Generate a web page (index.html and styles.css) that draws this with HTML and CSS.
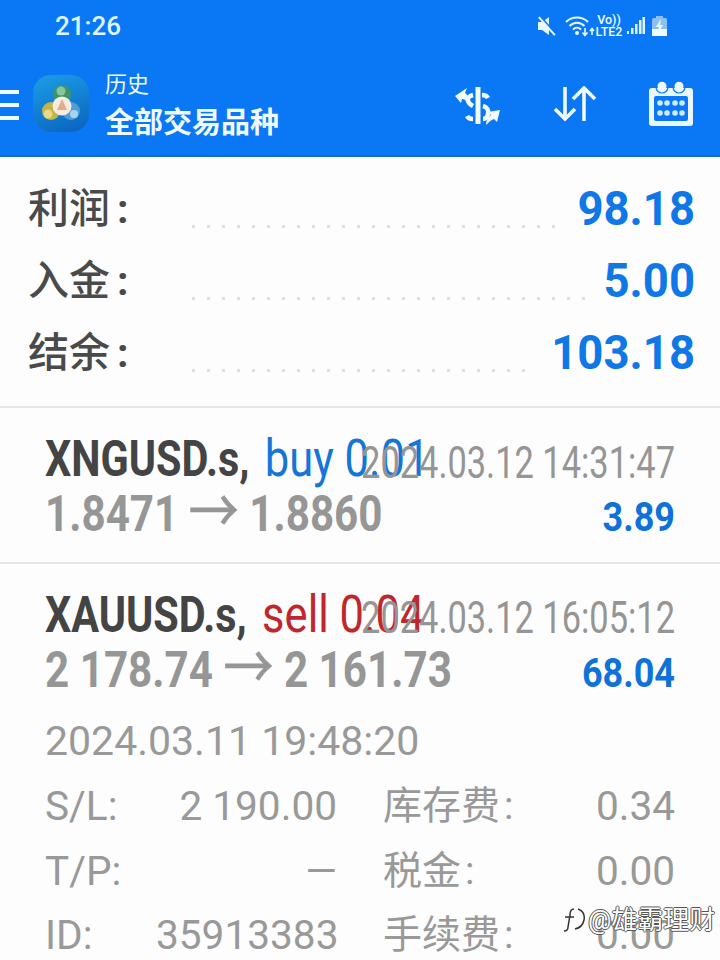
FILE: index.html
```html
<!DOCTYPE html>
<html lang="zh">
<head>
    <meta charset="UTF-8">
    <title>历史</title>
    <link rel="stylesheet" href="styles.css">
</head>
<body>
<div id="screen">
    <div id="header">
        <div class="status">
            <span class="clock">21:26</span>
            <div class="status-icons">
                <svg class="ic-mute" width="20" height="20" viewBox="0 0 20 20">
                    <path d="M1 6h4l7-5v18l-7-5H1z" fill="#e8f6ff"/>
                    <path d="M2 1l16 18" stroke="#e8f6ff" stroke-width="2.4"/>
                    <path d="M3.4 0.2l16 18" stroke="#0a78f4" stroke-width="1.4"/>
                </svg>
                <svg class="ic-wifi" width="30" height="22" viewBox="0 0 30 22" fill="none" stroke="#e8f6ff">
                    <path d="M1 7C7 1 17 1 23 7M4.500 11C9 6.500 15 6.500 19.500 11M8 14.500c2.500-2.500 5.500-2.500 8 0" stroke-width="2"/>
                    <circle cx="12" cy="18" r="2" fill="#e8f6ff" stroke="none"/>
                    <path d="M20 13v7M17.500 17.500l2.500 3 2.500-3M27 20v-6M25 16l2-2.500 2 2.500" stroke-width="1.600"/>
                </svg>
                <div class="volte"><span>Vo))</span><span>LTE2</span></div>
                <svg class="ic-signal" width="18" height="20" viewBox="0 0 18 20" fill="#dff3ff">
                    <rect x="0" y="15" width="2" height="3"/>
                    <rect x="4" y="12" width="2.500" height="6"/>
                    <rect x="8" y="8" width="2.500" height="10"/>
                    <rect x="12" y="4" width="2.500" height="14"/>
                    <rect x="15.500" y="1" width="2.500" height="17"/>
                </svg>
                <svg class="ic-batt" width="15" height="20" viewBox="0 0 15 20">
                    <rect x="4" y="0" width="7" height="2" fill="#8cc0f2"/>
                    <rect x="0" y="2" width="15" height="18" rx="1.500" fill="#8cc0f2"/>
                    <rect x="0" y="13" width="15" height="7" fill="#eef9ff"/>
                    <path d="M9 3L4 11h3l-1 6 5-8H8z" fill="#eef9ff"/>
                </svg>
            </div>
        </div>
        <div class="toolbar">
            <div class="burger"><i></i><i></i><i></i></div>
            <div class="logo">
                <svg width="40" height="40" viewBox="0 0 40 40">
                    <circle cx="21" cy="10" r="9" fill="#3f9468"/>
                    <circle cx="20" cy="7" r="4.500" fill="#86c79c"/>
                    <circle cx="10" cy="27" r="9" fill="#c3b447"/>
                    <circle cx="7" cy="30" r="4.500" fill="#e6d98a"/>
                    <circle cx="30" cy="27" r="9" fill="#4f9dd4"/>
                    <circle cx="33" cy="30" r="4" fill="#a8d5ee"/>
                    <circle cx="21" cy="22" r="9.500" fill="#f3ecdf"/>
                    <path d="M21 15l-5 11h10z" fill="#e3ad8a"/>
                </svg>
            </div>
            <div class="titles">
                <div class="title-sm">历史</div>
                <div class="title-lg">全部交易品种</div>
            </div>
            <div class="actions">
                <svg class="ic-dollar" width="46" height="42" viewBox="0 0 46 42" fill="none" stroke="#f0faff">
                    <path d="M23 2v37" stroke-width="5"/>
                    <path d="M18 10c-4 1-6 3-5 6s3 4 5 5M27 10c3 0 5 1 6 3M28 21c4 1 6 4 5 8s-3 5-5 5M18 34c-3 0-5-1-6-3" stroke-width="4.500"/>
                    <path d="M0 11L12 3l-2 5c2 1 4 4 4 11-3-4-5-5-7-5l-1 4z" fill="#f0faff" stroke="none"/>
                    <path d="M45 25l-12 2 3 3c-3 2-5 6-5 10 3-3 5-5 8-6l3 3z" fill="#f0faff" stroke="none"/>
                </svg>
                <svg class="ic-sort" width="44" height="36" viewBox="0 0 44 36" fill="none" stroke="#f0faff" stroke-width="3.600">
                    <path d="M12 1v32M2 23l10 10 10-10"/>
                    <path d="M31 35V3M20 13L31 2l11 11"/>
                </svg>
                <svg class="ic-cal" width="44" height="45" viewBox="0 0 44 45">
                    <circle cx="13" cy="5" r="4.500" fill="#eaf7ff"/>
                    <circle cx="30" cy="5" r="4.500" fill="#eaf7ff"/>
                    <rect x="0" y="7" width="44" height="38" rx="3" fill="#eaf7ff"/>
                    <circle cx="13" cy="6" r="6" fill="none" stroke="#0a78f4" stroke-width="1.200"/>
                    <circle cx="30" cy="6" r="6" fill="none" stroke="#0a78f4" stroke-width="1.200"/>
                    <rect x="5" y="15" width="34" height="25" rx="2" fill="#0a78f4"/>
                    <g fill="#cfeaff">
                        <circle cx="11" cy="22" r="2.800"/><circle cx="18" cy="22" r="2.800"/><circle cx="26" cy="22" r="2.800"/><circle cx="33" cy="22" r="2.800"/>
                        <circle cx="11" cy="32" r="2.800"/><circle cx="18" cy="32" r="2.800"/><circle cx="26" cy="32" r="2.800"/><circle cx="33" cy="32" r="2.800"/>
                    </g>
                </svg>
            </div>
        </div>
    </div>

    <div class="summary">
        <div class="sum-row"><span class="sum-label">利润<span class="colon">:</span></span><span class="leader"></span><span class="sum-val">98.18</span></div>
        <div class="sum-row"><span class="sum-label">入金<span class="colon">:</span></span><span class="leader"></span><span class="sum-val">5.00</span></div>
        <div class="sum-row"><span class="sum-label">结余<span class="colon">:</span></span><span class="leader"></span><span class="sum-val">103.18</span></div>
    </div>

    <div class="trade">
        <div class="trade-top">
            <div class="tall sym">XNGUSD.s, <span class="buy">buy 0.01</span></div>
            <div class="tall stamp">2024.03.12 14:31:47</div>
        </div>
        <div class="trade-bottom">
            <div class="tall price">1.8471 <span class="arrow">→</span> 1.8860</div>
            <div class="tall profit">3.89</div>
        </div>
    </div>

    <div class="trade open">
        <div class="trade-top">
            <div class="tall sym">XAUUSD.s, <span class="sell">sell 0.04</span></div>
            <div class="tall stamp">2024.03.12 16:05:12</div>
        </div>
        <div class="trade-bottom">
            <div class="tall price">2 178.74 <span class="arrow">→</span> 2 161.73</div>
            <div class="tall profit">68.04</div>
        </div>
        <div class="opened">2024.03.11 19:48:20</div>
        <div class="details">
            <span>S/L:</span><span class="num">2 190.00</span><span class="cjk">库存费<span class="colon">:</span></span><span class="num">0.34</span>
            <span>T/P:</span><span class="num">—</span><span class="cjk">税金<span class="colon">:</span></span><span class="num">0.00</span>
            <span>ID:</span><span class="num">35913383</span><span class="cjk">手续费<span class="colon">:</span></span><span class="num">0.00</span>
        </div>
    </div>

    <div class="watermark">
        <svg width="24" height="30" viewBox="0 0 24 30" fill="none" stroke="#333" stroke-width="1.500">
            <path d="M12 4c-3 0-4 2-4 6l-2 12c0 3-2 4-4 4M3 12h9"/>
            <path d="M16 4c5 2 7 6 6 11s-4 8-9 9"/>
        </svg>
        <span>@雄霸理财</span>
    </div>
</div>
</body>
</html>
```

FILE: styles.css
```css
* {
    margin: 0;
    padding: 0;
    box-sizing: border-box;
}
body {
    background: #fdfdfd;
    font-family: Roboto, "Noto Sans CJK SC", sans-serif;
}
#screen {
    width: 720px;
    height: 960px;
    overflow: hidden;
    position: relative;
}

/* header */
#header {
    height: 157px;
    background: #0a78f4;
    border-bottom: 2px solid #1668c4;
    color: #eefaff;
}
.status {
    height: 52px;
    display: flex;
    align-items: center;
    padding-left: 55px;
}
.clock {
    font-size: 26px;
    font-weight: 500;
    color: #dff5ff;
}
.status-icons {
    margin-left: 416px;
    display: flex;
    align-items: center;
}
.ic-wifi {
    margin-left: 8px;
}
.volte {
    display: flex;
    flex-direction: column;
    align-items: center;
    font-size: 12.500px;
    font-weight: 500;
    line-height: 12px;
    margin-left: -1px;
    width: 30px;
}
.ic-signal {
    margin-left: 3px;
}
.ic-batt {
    margin-left: 7px;
}
.toolbar {
    display: flex;
    align-items: center;
    height: 103px;
}
.burger {
    width: 19px;
    display: flex;
    flex-direction: column;
    gap: 9px;
    margin-top: 2px;
}
.burger i {
    display: block;
    height: 4px;
    background: #eefaff;
}
.logo {
    width: 56px;
    height: 57px;
    margin-left: 14px;
    border-radius: 18px;
    background: linear-gradient(160deg, #1c9ee6, #0a62bf);
    display: flex;
    align-items: center;
    justify-content: center;
}
.titles {
    margin: 8px 0 0 16px;
    width: 350px;
}
.title-sm {
    font-size: 22px;
    line-height: 30px;
}
.title-lg {
    font-size: 29px;
    line-height: 46px;
    font-weight: 700;
}
.actions {
    display: flex;
    align-items: center;
}
.ic-dollar {
    margin-top: 4px;
}
.ic-sort {
    margin-left: 52px;
}
.ic-cal {
    margin-left: 52px;
}

/* summary */
.summary {
    height: 251px;
    padding: 15px 25px 0 28px;
    border-bottom: 2px solid #e6e6e6;
}
.sum-row {
    height: 72px;
    display: flex;
    align-items: center;
}
.sum-label {
    width: 164px;
    font-size: 41px;
    font-weight: 500;
    color: #4a4a4a;
    padding-bottom: 6px;
}
.colon {
    margin-left: 7px;
    font-weight: 700;
}
.leader {
    flex: 1;
    height: 3px;
    margin: 36px 14px 0 0;
    background: linear-gradient(90deg, #dedede 3px, transparent 3px) 0 0 / 15px 3px repeat-x;
}
.sum-val {
    font-size: 45.500px;
    font-weight: 700;
    color: #0f78e6;
    transform: scaleY(1.06);
}

/* trade rows */
.trade {
    height: 156px;
    padding: 22px 45px 0 45px;
    border-bottom: 2px solid #e6e6e6;
}
.trade.open {
    height: auto;
    border-bottom: 0;
}
.tall {
    transform: scaleY(1.2);
    white-space: nowrap;
}
.trade-top {
    display: grid;
    height: 56px;
    align-items: center;
}
.trade-top > div {
    grid-area: 1 / 1;
}
.sym {
    font-size: 41.400px;
    font-weight: 700;
    color: #444;
}
.buy, .sell {
    font-weight: 400;
    font-size: 43.500px;
    margin-left: 5px;
}
.buy {
    color: #1476d8;
}
.sell {
    color: #c0272d;
}
.stamp {
    justify-self: end;
    font-size: 34.400px;
    color: #959595;
    padding-top: 6px;
    transform: scaleY(1.3);
}
.trade-bottom {
    display: flex;
    justify-content: space-between;
    align-items: center;
    height: 46px;
}
.price {
    font-size: 42.200px;
    font-weight: 700;
    color: #969696;
    padding-top: 5px;
}
.arrow {
    font-size: 50px;
    font-weight: 400;
    line-height: 1;
    vertical-align: -2px;
    -webkit-text-stroke: 0.6px #969696;
}
.profit {
    font-size: 36px;
    font-weight: 700;
    color: #0f72d8;
    padding-top: 14px;
    transform: scaleY(1.15);
}
.opened {
    font-size: 41px;
    line-height: 66px;
    color: #999;
    margin-top: 20px;
}
.details {
    display: grid;
    grid-template-columns: 111px 181px 150px 1fr;
    font-size: 40.600px;
    line-height: 64.500px;
    color: #999;
    white-space: nowrap;
}
.cjk {
    margin-left: 46px;
    font-size: 39px;
}
.cjk .colon {
    margin-left: 4px;
    font-weight: 400;
}
.num {
    text-align: right;
}

/* watermark */
.watermark {
    position: absolute;
    left: 562px;
    top: 905px;
    display: flex;
    align-items: center;
    gap: 2px;
    font-size: 26px;
    line-height: 30px;
    white-space: nowrap;
    color: #fff;
    text-shadow: 1px 0 0 #555, -1px 0 0 #555, 0 1px 0 #555, 0 -1px 0 #555;
}
```
